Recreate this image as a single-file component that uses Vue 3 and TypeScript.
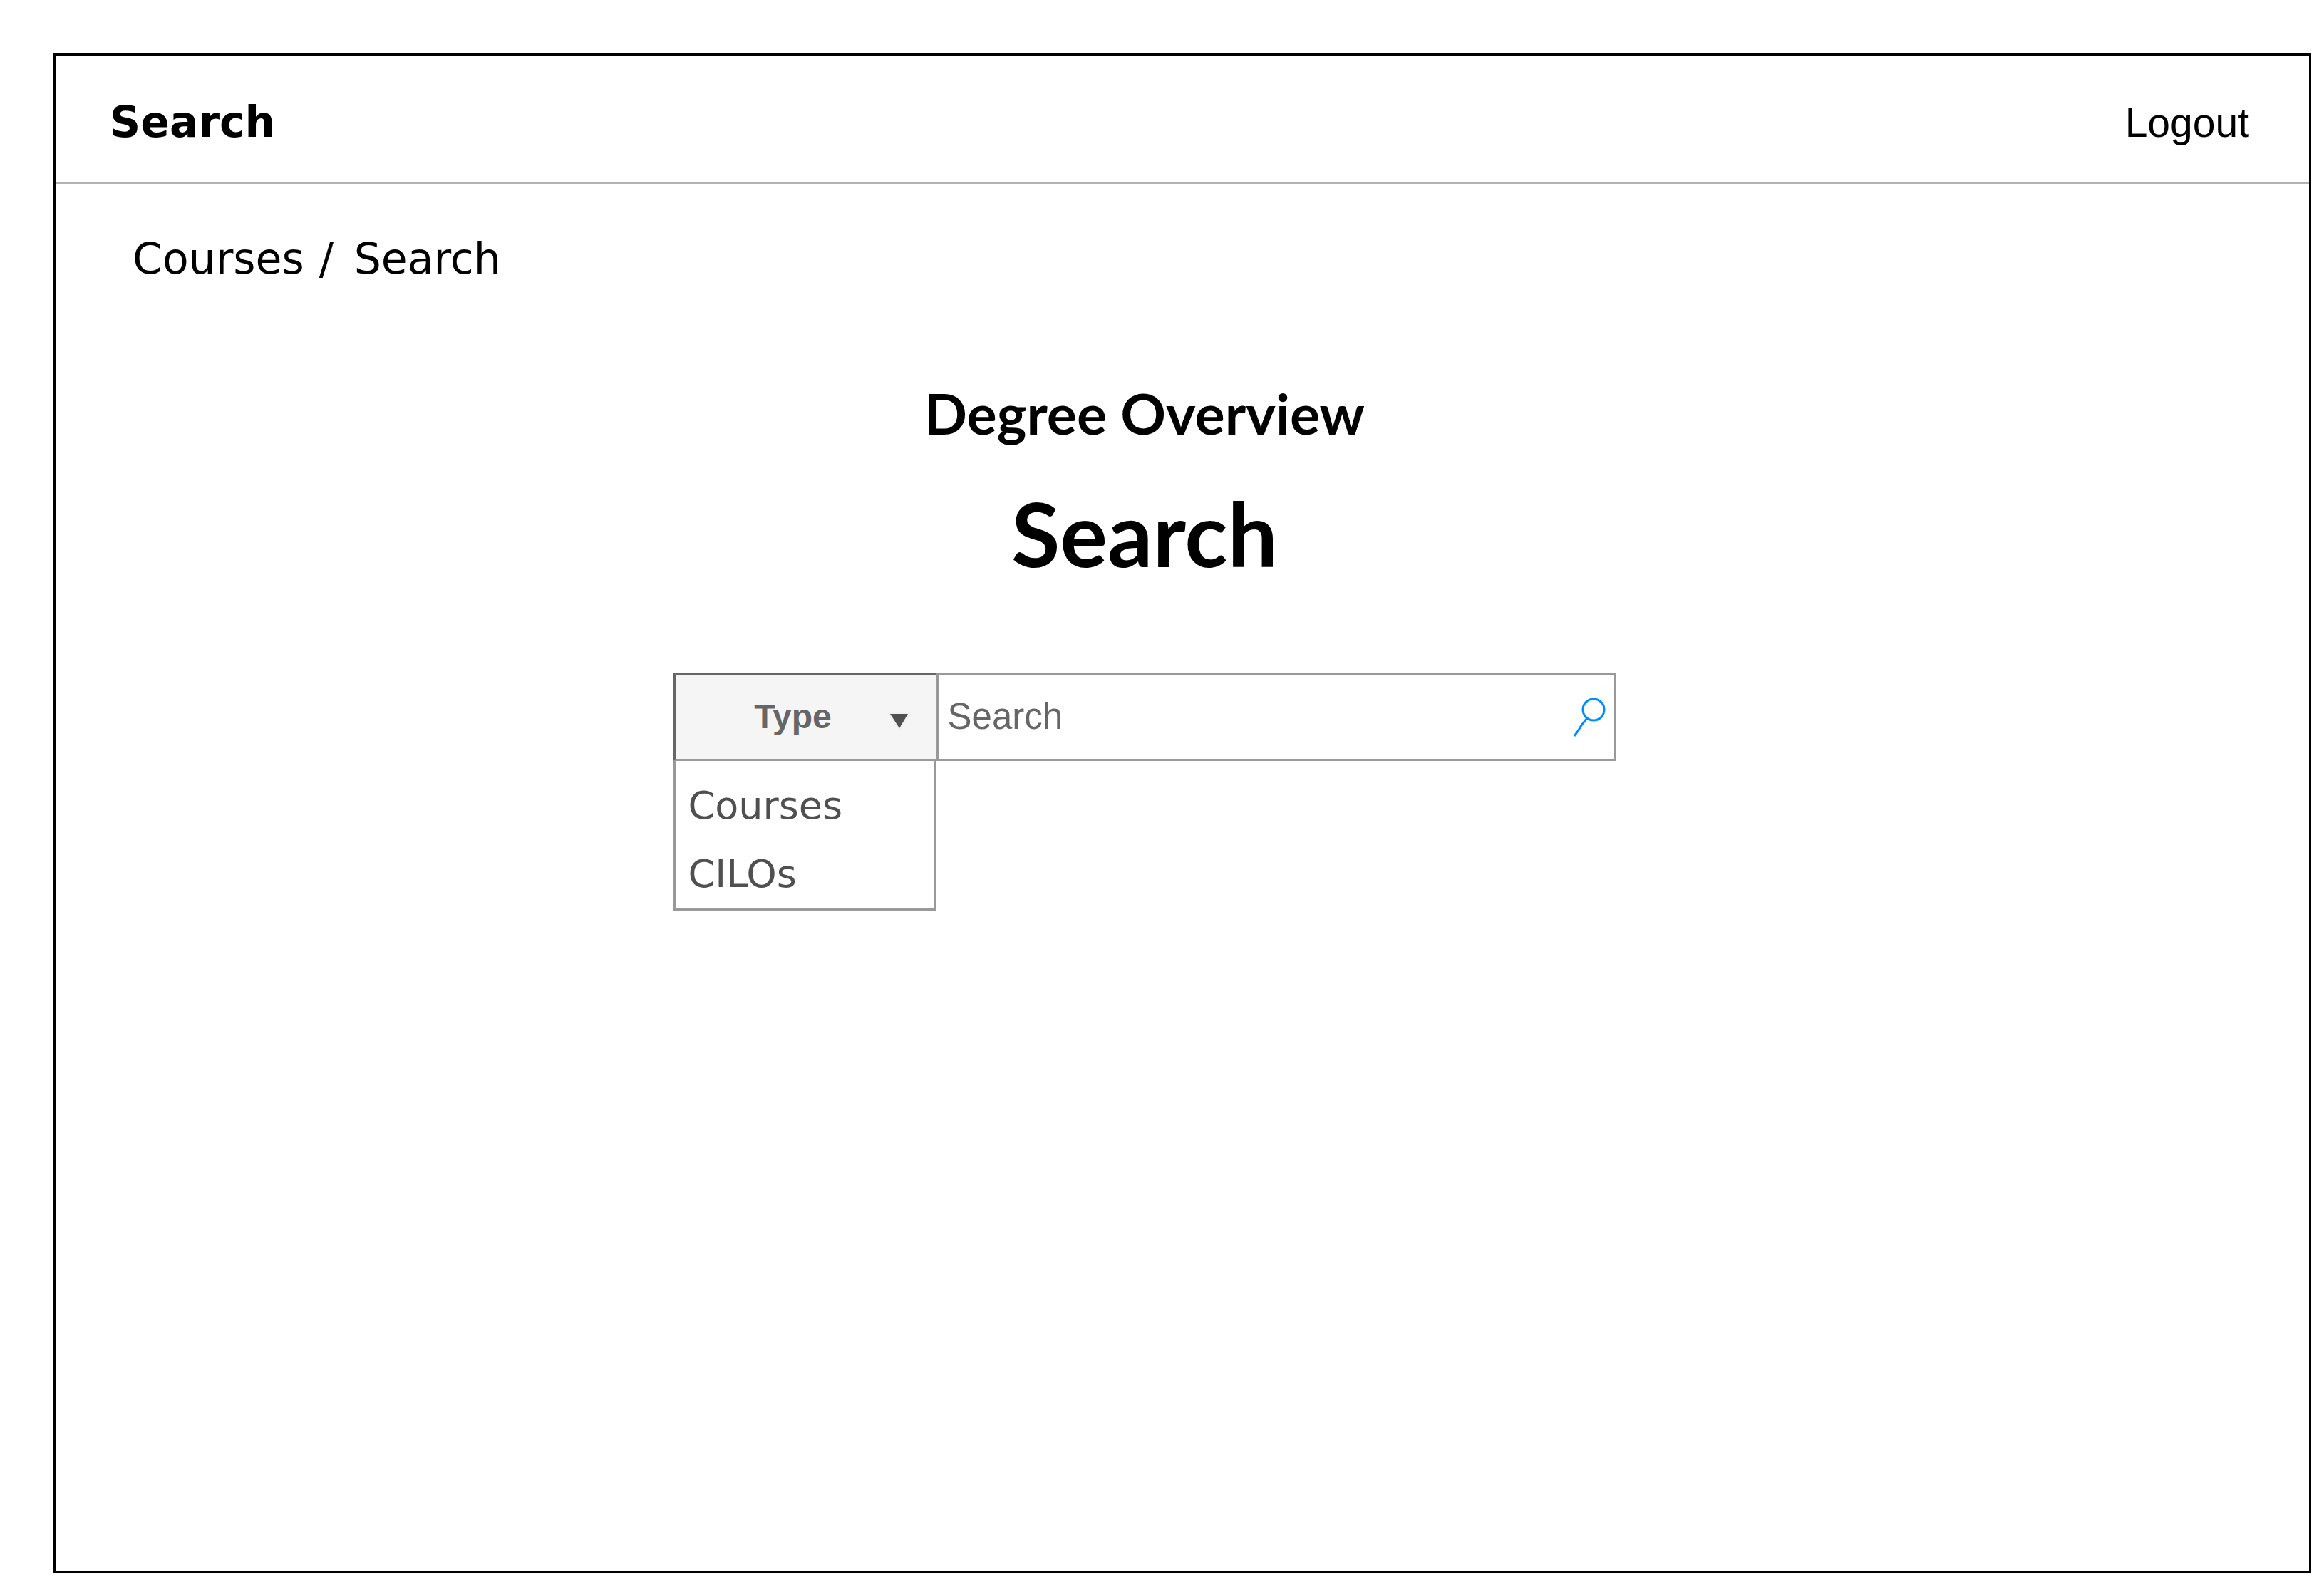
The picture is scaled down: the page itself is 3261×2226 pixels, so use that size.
<script setup lang="ts">
import { ref } from 'vue'

const types: string[] = ['Courses', 'CILOs']
const selectedType = ref<string>('')
const query = ref<string>('')
</script>

<template>
  <div class="page">
    <div class="frame">
      <header class="topbar">
        <strong class="brand">Search</strong>
        <a class="logout" href="#logout">Logout</a>
      </header>

      <nav class="breadcrumb" aria-label="Breadcrumb">
        <a href="#courses">Courses</a>
        <span class="separator">/</span>
        <span aria-current="page">Search</span>
      </nav>

      <main class="content">
        <h2 class="subtitle">Degree Overview</h2>
        <h1 class="title">Search</h1>

        <form class="search" role="search" @submit.prevent>
          <div class="type">
            <select v-model="selectedType" class="type-select" aria-label="Type">
              <option value="">Type</option>
              <option v-for="type in types" :key="type" :value="type">{{ type }}</option>
            </select>
            <svg class="arrow" viewBox="0 0 36 28" aria-hidden="true">
              <path d="M0 0H36L18 28Z" fill="#f0f0f0" />
              <path d="M5 3H30L18 23Z" fill="#505050" />
            </svg>
            <ul class="menu">
              <li v-for="type in types" :key="type">
                <button type="button" class="menu-item" @click="selectedType = type">{{ type }}</button>
              </li>
            </ul>
          </div>
          <div class="field">
            <input v-model="query" class="query" type="text" placeholder="Search" aria-label="Search" />
            <button class="submit" type="submit" aria-label="Submit search">
              <svg viewBox="0 0 46 56" aria-hidden="true">
                <g fill="none" stroke="#008cff" stroke-width="3" stroke-linecap="round">
                  <circle cx="28" cy="17" r="15" />
                  <path d="M19 29C14 35 11 38 8 44C6 48 4 49 2 53" />
                </g>
              </svg>
            </button>
          </div>
        </form>
      </main>
    </div>
  </div>
</template>

<style>
body {
  margin: 0;
  background: #fff;
}
</style>

<style scoped>
.page {
  box-sizing: border-box;
  display: flex;
  min-height: 100vh;
  padding: 75px 18px 18px 75px;
  color: #000;
  font-family: Verdana, "DejaVu Sans", sans-serif;
}

.frame {
  flex: 1;
  min-width: 0;
  border: 3px solid #000;
}

.topbar {
  display: flex;
  align-items: baseline;
  justify-content: space-between;
  padding: 57px 84px 47px 76px;
  border-bottom: 3px solid #b3b3b3;
  line-height: 72px;
}

.brand {
  font-size: 60px;
}

.logout {
  color: inherit;
  font-family: Arial, "Liberation Sans", sans-serif;
  font-size: 57px;
  text-decoration: none;
}

.breadcrumb {
  display: flex;
  gap: 21px;
  padding: 69px 108px 0;
  font-size: 60px;
  line-height: 72px;
}

.breadcrumb a {
  color: inherit;
  text-decoration: none;
}

.separator {
  width: 28px;
}

.content {
  display: flex;
  flex-direction: column;
  align-items: center;
  padding: 133px 106px 240px 0;
}

.subtitle,
.title {
  margin: 0;
  font-family: "Comic Sans MS", Lato, sans-serif;
  font-weight: 700;
}

.subtitle {
  font-size: 79px;
  line-height: 96px;
}

.title {
  margin-top: 48px;
  font-size: 125px;
  line-height: 144px;
}

.search {
  display: flex;
  width: 1323px;
  max-width: 100%;
  height: 123px;
  margin-top: 125px;
}

.type {
  position: relative;
  flex: none;
  width: 369px;
}

.type-select {
  box-sizing: border-box;
  width: 100%;
  height: 100%;
  margin: 0;
  padding: 0 36px 3px 0;
  border: 3px solid #666;
  border-right: 0;
  border-bottom-color: #999;
  border-radius: 0;
  background: #f5f5f5;
  color: #666;
  appearance: none;
  font-family: Arial, "Liberation Sans", sans-serif;
  font-size: 48px;
  font-weight: 700;
  text-align-last: center;
}

.arrow {
  position: absolute;
  top: 54px;
  right: 34px;
  width: 36px;
  height: 28px;
  pointer-events: none;
}

.menu {
  position: absolute;
  top: 100%;
  left: 0;
  box-sizing: border-box;
  width: 100%;
  margin: 0;
  padding: 15px 0 0;
  border: 3px solid #999;
  border-top: 0;
  background: #fff;
  list-style: none;
}

.menu-item {
  display: block;
  width: 100%;
  height: 96px;
  padding: 0 18px;
  border: 0;
  background: none;
  color: #505050;
  font-family: inherit;
  font-size: 54px;
  line-height: 96px;
  text-align: left;
}

.field {
  box-sizing: border-box;
  display: flex;
  flex: 1;
  align-items: center;
  min-width: 0;
  padding-right: 11px;
  border: 3px solid #999;
}

.query {
  flex: 1;
  min-width: 0;
  height: 100%;
  box-sizing: border-box;
  padding: 0 13px 3px;
  border: 0;
  outline: 0;
  background: none;
  color: #666;
  font-family: Arial, "Liberation Sans", sans-serif;
  font-size: 51px;
}

.query::placeholder {
  color: #666;
  opacity: 1;
}

.submit {
  flex: none;
  padding: 0;
  border: 0;
  background: none;
}

.submit svg {
  display: block;
  width: 46px;
  height: 56px;
}
</style>
